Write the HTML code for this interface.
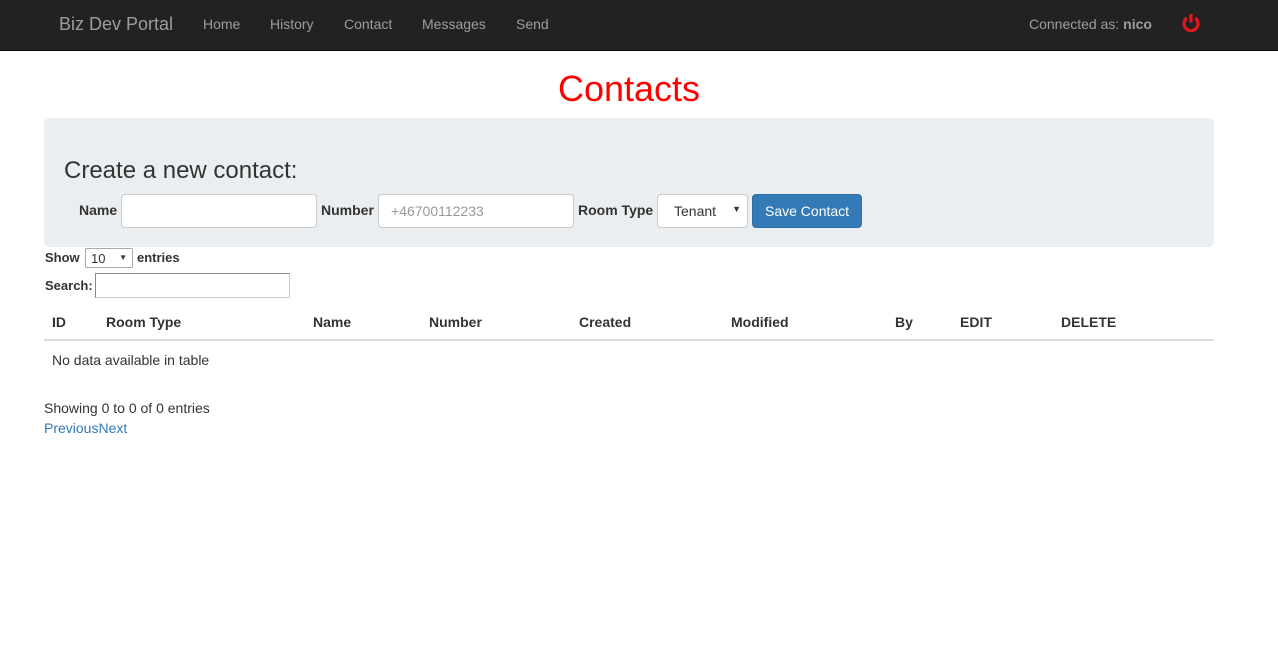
<!DOCTYPE html>
<html><head><style>
*{box-sizing:border-box}
body{margin:0;font-family:"Liberation Sans",sans-serif;font-size:14px;color:#333;background:#fff}
.nav{height:51px;background:#222;border-bottom:1px solid #080808;position:relative}
.nav span{position:absolute;top:16px;color:#9d9d9d;font-size:14px}
.brand{font-size:18px!important;top:14px!important}
h1{color:#f00;font-weight:400;font-size:36px;text-align:center;margin:0;position:absolute;top:68px;left:0;width:1258px}
.jumbo{position:absolute;left:44px;top:118px;width:1170px;height:129px;background:#eaeef0;border-radius:6px}
.abs{position:absolute}
.inp{position:absolute;background:#fff;border:1px solid #ccc;border-radius:4px;height:34px}
b{font-weight:700}
.th{position:absolute;top:314px;font-weight:700}
</style></head><body>
<div class="nav">
<span class="brand" style="left:59px">Biz Dev Portal</span>
<span style="left:203px">Home</span><span style="left:270px">History</span><span style="left:344px">Contact</span><span style="left:422px">Messages</span><span style="left:516px">Send</span>
<span style="left:1029px">Connected as: <b>nico</b></span>
<svg style="position:absolute;left:1181px;top:12px" width="20" height="21" viewBox="0 0 20 21"><path d="M5.8 6A7 7 0 1 0 14.2 6" fill="none" stroke="#e8141b" stroke-width="3.2"/><path d="M10 2v8.5" stroke="#e8141b" stroke-width="3.2"/></svg>
</div>
<h1>Contacts</h1>
<div class="jumbo"></div>
<div class="abs" style="left:64px;top:157px;font-size:24px">Create a new contact:</div>
<div class="abs" style="left:79px;top:202px;font-weight:700">Name</div>
<div class="inp" style="left:121px;top:194px;width:196px"></div>
<div class="abs" style="left:321px;top:202px;font-weight:700">Number</div>
<div class="inp" style="left:378px;top:194px;width:196px;color:#999;padding:8px 12px">+46700112233</div>
<div class="abs" style="left:578px;top:202px;font-weight:700">Room Type</div>
<div class="inp" style="left:657px;top:194px;width:91px;padding:8px 16px">Tenant<span style="position:absolute;right:6px;top:9px;font-size:9px">▼</span></div>
<div class="abs" style="left:752px;top:194px;width:110px;height:34px;background:#337ab7;border:1px solid #2e6da4;border-radius:4px;color:#fff;padding:8px 0 0 12px">Save Contact</div>
<div class="abs" style="left:45px;top:250px;font-weight:700;font-size:13px">Show</div>
<div class="abs" style="left:85px;top:248px;width:48px;height:20px;border:1px solid #aaa;border-radius:2px;font-size:13px;padding:2px 5px">10<span style="position:absolute;right:5px;top:4px;font-size:8px">▼</span></div>
<div class="abs" style="left:137px;top:250px;font-weight:700;font-size:13px">entries</div>
<div class="abs" style="left:45px;top:278px;font-weight:700;font-size:13px">Search:</div>
<div class="abs" style="left:95px;top:273px;width:195px;height:25px;border:1px solid #ccc;border-top-color:#888;border-left-color:#888"></div>
<div class="th" style="left:52px">ID</div><div class="th" style="left:106px">Room Type</div><div class="th" style="left:313px">Name</div><div class="th" style="left:429px">Number</div><div class="th" style="left:579px">Created</div><div class="th" style="left:731px">Modified</div><div class="th" style="left:895px">By</div><div class="th" style="left:960px">EDIT</div><div class="th" style="left:1061px">DELETE</div>
<div class="abs" style="left:44px;top:339px;width:1170px;height:2px;background:#ddd"></div>
<div class="abs" style="left:52px;top:352px">No data available in table</div>
<div class="abs" style="left:44px;top:400px">Showing 0 to 0 of 0 entries</div>
<div class="abs" style="left:44px;top:420px;color:#337ab7">PreviousNext</div>
</body></html>
